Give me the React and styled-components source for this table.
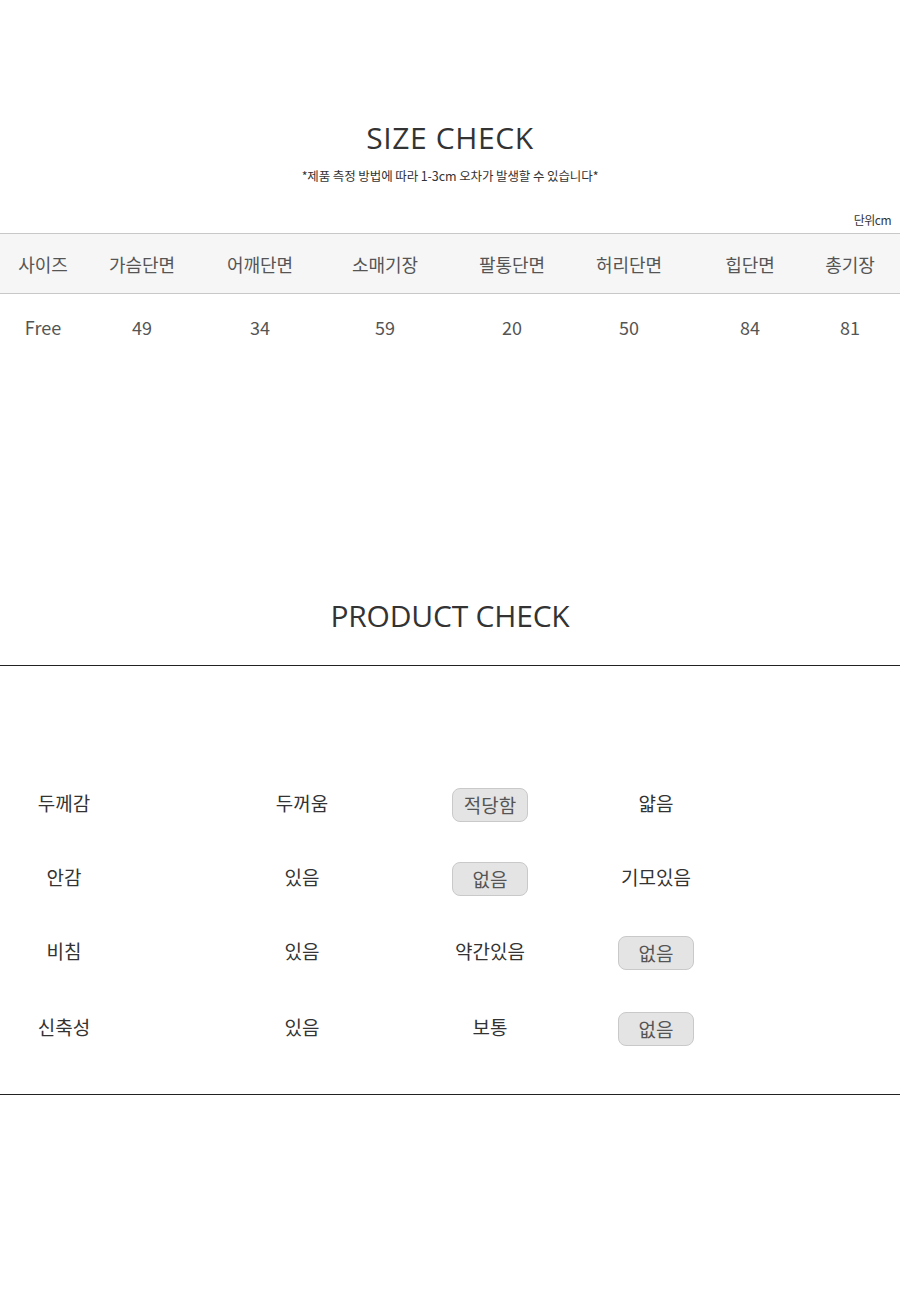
import React from "react";
import styled, { createGlobalStyle } from "styled-components";

const GlobalStyle = createGlobalStyle`
  body {
    margin: 0;
    background: #fff;
    font-family: "Noto Sans CJK KR", "Noto Sans", sans-serif;
    color: #333;
  }
`;

const Page = styled.div`
  width: 900px;
  height: 1300px;
  overflow: hidden;
`;

const Title = styled.h2`
  margin: 0;
  font-family: "Open Sans", "Noto Sans", sans-serif;
  font-weight: 400;
  font-size: 30px;
  line-height: 40px;
  color: #333;
  text-align: center;
`;

const SizeTitle = styled(Title)`
  padding-top: 118px;
  letter-spacing: 0.6px;
`;

const Note = styled.p`
  margin: 10px 0 0;
  font-size: 12.5px;
  line-height: 16px;
  color: #333;
  text-align: center;
  letter-spacing: -0.1px;
`;

const Unit = styled.div`
  margin-top: 29px;
  padding-right: 9px;
  font-size: 12px;
  line-height: 14px;
  color: #333;
  text-align: right;
  letter-spacing: -0.5px;
`;

const Table = styled.div`
  margin-top: 6px;
`;

const TableRow = styled.div`
  display: grid;
  grid-template-columns: 86px 112px 124px 126px 128px 106px 136px 64px;
  height: ${(p) => p.$h}px;
  align-items: center;
  background: ${(p) => (p.$head ? "#f6f6f6" : "#fff")};
  border-top: ${(p) => (p.$head ? "1px solid #c8c8c8" : "none")};
  border-bottom: ${(p) => (p.$head ? "1px solid #c8c8c8" : "none")};
`;

const Cell = styled.div`
  text-align: center;
  font-size: 18px;
  color: #555;
`;

const ProductTitle = styled(Title)`
  margin-top: 236px;
  letter-spacing: -0.2px;
`;

const Divider = styled.hr`
  margin: 0;
  border: none;
  border-top: 1px solid #222;
`;

const TopDivider = styled(Divider)`
  margin-top: 29px;
`;

const CheckList = styled.div`
  padding: 99px 0 29px;
`;

const CheckRow = styled.div`
  display: flex;
  align-items: center;
  height: ${(p) => p.$h}px;
`;

const Label = styled.div`
  width: 128px;
  text-align: center;
  font-size: 19px;
  color: #333;
`;

const Options = styled.div`
  margin-left: 74px;
  display: grid;
  grid-template-columns: 200px 176px 156px;
  align-items: center;
  justify-items: center;
`;

const Option = styled.div`
  box-sizing: border-box;
  width: ${(p) => (p.$on ? "76px" : "auto")};
  height: 34px;
  margin-top: ${(p) => (p.$on ? "4px" : "0")};
  line-height: 32px;
  text-align: center;
  font-size: 19px;
  color: ${(p) => (p.$on ? "#555" : "#333")};
  background: ${(p) => (p.$on ? "#e4e4e4" : "transparent")};
  border: 1px solid ${(p) => (p.$on ? "#c9c9c9" : "transparent")};
  border-radius: 8px;
`;

const headers = ["사이즈", "가슴단면", "어깨단면", "소매기장", "팔통단면", "허리단면", "힙단면", "총기장"];
const values = ["Free", "49", "34", "59", "20", "50", "84", "81"];

const checks = [
  { label: "두께감", options: ["두꺼움", "적당함", "얇음"], on: 1, h: 75 },
  { label: "안감", options: ["있음", "없음", "기모있음"], on: 1, h: 73 },
  { label: "비침", options: ["있음", "약간있음", "없음"], on: 2, h: 75 },
  { label: "신축성", options: ["있음", "보통", "없음"], on: 2, h: 77 },
];

export default function App() {
  return (
    <Page>
      <GlobalStyle />
      <SizeTitle>SIZE CHECK</SizeTitle>
      <Note>*제품 측정 방법에 따라 1-3cm 오차가 발생할 수 있습니다*</Note>
      <Unit>단위cm</Unit>
      <Table>
        <TableRow $head $h={59}>
          {headers.map((h) => (
            <Cell key={h}>{h}</Cell>
          ))}
        </TableRow>
        <TableRow $h={66}>
          {values.map((v, i) => (
            <Cell key={i}>{v}</Cell>
          ))}
        </TableRow>
      </Table>
      <ProductTitle>PRODUCT CHECK</ProductTitle>
      <TopDivider />
      <CheckList>
        {checks.map((c) => (
          <CheckRow key={c.label} $h={c.h}>
            <Label>{c.label}</Label>
            <Options>
              {c.options.map((o, i) => (
                <Option key={o} $on={i === c.on}>
                  {o}
                </Option>
              ))}
            </Options>
          </CheckRow>
        ))}
      </CheckList>
      <Divider />
    </Page>
  );
}
